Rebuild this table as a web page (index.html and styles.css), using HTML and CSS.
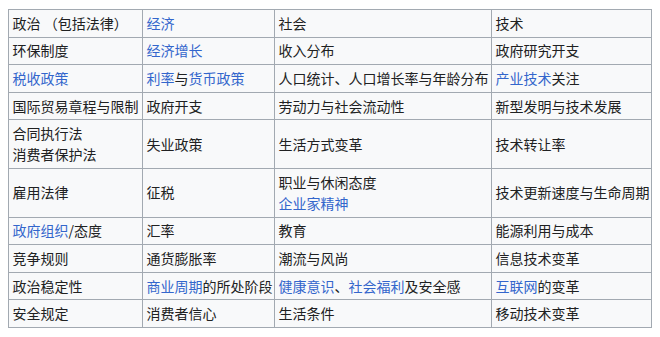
FILE: index.html
```html
<!DOCTYPE html>
<html lang="zh-CN">
<head>
<meta charset="utf-8">
<title>PEST</title>
<link rel="stylesheet" href="styles.css">
</head>
<body>
<table class="wikitable">
  <colgroup>
    <col class="c1"><col class="c2"><col class="c3"><col class="c4">
  </colgroup>
  <tbody>
    <tr><td>政治 （包括法律）</td><td><a href="#">经济</a></td><td>社会</td><td>技术</td></tr>
    <tr><td>环保制度</td><td><a href="#">经济增长</a></td><td>收入分布</td><td>政府研究开支</td></tr>
    <tr><td><a href="#">税收政策</a></td><td><a href="#">利率</a>与<a href="#">货币政策</a></td><td>人口统计、人口增长率与年龄分布</td><td><a href="#">产业技术</a>关注</td></tr>
    <tr><td>国际贸易章程与限制</td><td>政府开支</td><td>劳动力与社会流动性</td><td>新型发明与技术发展</td></tr>
    <tr><td>合同执行法<br>消费者保护法</td><td>失业政策</td><td>生活方式变革</td><td>技术转让率</td></tr>
    <tr><td>雇用法律</td><td>征税</td><td>职业与休闲态度<br><a href="#">企业家精神</a></td><td>技术更新速度与生命周期</td></tr>
    <tr><td><a href="#">政府组织</a>/态度</td><td>汇率</td><td>教育</td><td>能源利用与成本</td></tr>
    <tr><td>竞争规则</td><td>通货膨胀率</td><td>潮流与风尚</td><td>信息技术变革</td></tr>
    <tr><td>政治稳定性</td><td><a href="#">商业周期</a>的所处阶段</td><td><a href="#">健康意识</a>、<a href="#">社会福利</a>及安全感</td><td><a href="#">互联网</a>的变革</td></tr>
    <tr><td>安全规定</td><td>消费者信心</td><td>生活条件</td><td>移动技术变革</td></tr>
  </tbody>
</table>
</body>
</html>
```
FILE: styles.css
```css
html, body {
  margin: 0;
  padding: 0;
  background: #ffffff;
}
body {
  padding: 9px 8px;
  font-family: "Noto Sans CJK SC", "Liberation Sans", sans-serif;
  font-size: 14px;
  color: #202122;
}
.wikitable {
  border-collapse: collapse;
  table-layout: fixed;
  width: 643px;
  background: #f8f9fa;
  border: 1px solid #a2a9b1;
}
.c1 { width: 134px; }
.c2 { width: 132px; }
.c3 { width: 217px; }
.c4 { width: 160px; }
.wikitable td {
  border: 1px solid #a2a9b1;
  padding: 2.8px 3.5px;
  line-height: 21px;
  white-space: nowrap;
  vertical-align: middle;
  overflow: hidden;
}
.wikitable a {
  color: #3366cc;
  text-decoration: none;
}
```
